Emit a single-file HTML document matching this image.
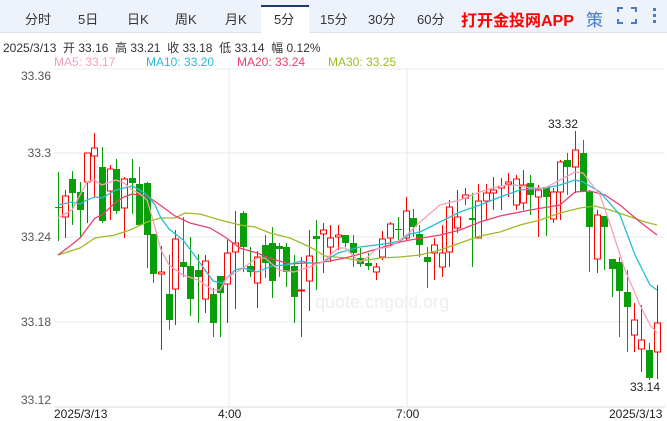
<!DOCTYPE html>
<html><head><meta charset="utf-8"><style>
body{margin:0;width:667px;height:421px;overflow:hidden;background:#fff;font-family:"Liberation Sans","Noto Sans CJK SC",sans-serif;position:relative}
.hdr{position:absolute;left:0;top:0;width:667px;height:32px;background:#eef3fb;border-bottom:1px solid #dde3ee}
.t{position:absolute;top:9px;font-size:13px;color:#333}
.act{position:absolute;left:261px;top:5px;width:48px;height:28px;background:#fff;border-top:2px solid #1f3a6e}
.info{position:absolute;left:3px;top:39px;font-size:12px;color:#333;white-space:nowrap}
.ma{position:absolute;top:55px;font-size:12px;white-space:nowrap}
svg{position:absolute;left:0;top:0}
</style></head><body>
<div class="hdr"></div>
<div class="act"></div>
<span class="t" style="left:25px">分时</span>
<span class="t" style="left:78px">5日</span>
<span class="t" style="left:127px">日K</span>
<span class="t" style="left:175px">周K</span>
<span class="t" style="left:225px">月K</span>
<span class="t" style="left:274px">5分</span>
<span class="t" style="left:320px">15分</span>
<span class="t" style="left:368px">30分</span>
<span class="t" style="left:417px">60分</span>
<span class="t" style="left:461px;top:7px;font-size:16px;font-weight:bold;color:#f00">打开金投网APP</span>
<span class="t" style="left:586px;top:6px;font-size:17px;color:#4a7cc4">策</span>
<div class="info">2025/3/13&nbsp; 开 33.16&nbsp; 高 33.21&nbsp; 收 33.18&nbsp; 低 33.14&nbsp; 幅 0.12%</div>
<span class="ma" style="left:54px;color:#f4a0b8">MA5: 33.17</span>
<span class="ma" style="left:146px;color:#26bcd5">MA10: 33.20</span>
<span class="ma" style="left:237px;color:#e8406f">MA20: 33.24</span>
<span class="ma" style="left:328px;color:#9abd23">MA30: 33.25</span>
<svg width="667" height="421" id="s" font-family="Liberation Sans, sans-serif">
<g fill="none" stroke="#4a7cc4" stroke-width="2">
<path d="M618 12v-4h5M631 8h5v4M636 19v4h-5M623 23h-5v-4"/></g>
<g fill="#4a7cc4"><rect x="653" y="8" width="3" height="3"/><rect x="653" y="14" width="3" height="3"/><rect x="653" y="20" width="3" height="3"/></g>
<line x1="54" y1="69" x2="665" y2="69" stroke="#eee"/>
<g stroke="#e8e8e8"><line x1="54" y1="153" x2="665" y2="153"/><line x1="54" y1="237" x2="665" y2="237"/><line x1="54" y1="322" x2="665" y2="322"/><line x1="229" y1="69" x2="229" y2="407"/><line x1="407" y1="69" x2="407" y2="407"/></g>
<line x1="54" y1="407" x2="665" y2="407" stroke="#ddd"/>
<g font-size="12" fill="#555" text-anchor="end"><text x="51" y="80">33.36</text><text x="51" y="157">33.3</text><text x="51" y="241">33.24</text><text x="51" y="326">33.18</text><text x="51" y="404">33.12</text></g>
<g font-size="12" fill="#222"><text x="54" y="418">2025/3/13</text><text x="218" y="418">4:00</text><text x="396" y="418">7:00</text><text x="609" y="418">2025/3/13</text><text x="548" y="128">33.32</text><text x="630" y="391">33.14</text></g>
<text x="315" y="308" font-size="18" fill="#eee">quote.cngold.org</text>
<g id="c"></g><g id="m" fill="none" stroke-width="1.3"></g>
</svg>
<script>
var d=[[58,207,208,172,241,0],[65,196,217,190,238,1],[72,179,193,171,225,0],[80,192,210,182,238,0],[87,153,182,153,223,1],[94,148,156,133,197,1],[102,167,221,147,223,0],[110,169,191,165,220,1],[116,169,211,159,214,0],[124,179,208,177,238,1],[132,178,183,159,214,0],[139,184,225,167,225,0],[147,183,235,182,268,0],[153,234,274,234,283,0],[161,272,274,246,350,1],[169,294,320,255,330,0],[175,239,289,230,325,1],[183,262,267,217,277,0],[190,266,299,237,316,0],[198,270,277,254,323,0],[205,261,299,255,313,1],[213,294,323,288,337,0],[220,276,293,276,337,0],[227,253,284,240,323,1],[235,243,252,211,309,1],[243,213,247,211,272,0],[250,266,272,247,277,0],[257,257,283,251,308,1],[265,245,263,235,278,0],[272,243,281,227,298,0],[279,246,249,243,277,0],[286,247,272,243,287,0],[294,266,297,255,323,0],[301,290,291,257,337,1],[309,256,281,230,311,1],[316,236,239,220,290,0],[323,230,234,223,273,1],[330,238,247,225,262,1],[338,235,237,225,250,1],[345,235,243,235,247,0],[353,243,253,235,267,0],[360,258,264,248,267,0],[368,263,266,253,270,0],[376,267,272,263,280,1],[382,239,257,231,260,1],[390,224,238,222,247,1],[398,229,230,217,243,0],[406,211,238,197,240,1],[413,218,227,209,237,0],[419,234,245,225,257,0],[427,257,262,247,288,0],[434,245,253,238,280,1],[442,253,267,225,277,1],[449,207,252,200,267,1],[457,217,228,190,233,1],[465,195,198,188,205,1],[472,218,220,193,267,0],[478,201,238,184,238,1],[486,193,201,184,220,1],[493,190,193,177,210,1],[501,186,188,178,210,1],[508,182,184,173,197,1],[516,179,205,175,210,1],[523,185,203,170,210,1],[530,183,195,175,215,0],[538,190,197,185,237,1],[546,187,197,187,236,0],[553,192,219,188,223,1],[560,162,192,160,220,1],[567,160,167,153,195,0],[575,150,167,131,193,1],[583,153,192,140,192,0],[589,192,227,190,272,0],[597,215,259,210,273,1],[604,216,227,216,270,0],[612,259,269,259,297,0],[619,262,291,257,337,0],[627,292,307,270,352,0],[634,320,335,303,352,1],[641,340,349,305,372,1],[649,350,378,343,380,0],[657,323,352,285,379,1]];
var h='';d.forEach(function(c){var col=c[5]?'#f00':'#0a9f0a';h+='<line x1="'+(c[0]+.5)+'" y1="'+c[3]+'" x2="'+(c[0]+.5)+'" y2="'+c[4]+'" stroke="'+col+'"/>';var ht=Math.max(c[2]-c[1],1);if(c[5])h+='<rect x="'+(c[0]-2.5)+'" y="'+c[1]+'" width="6" height="'+ht+'" fill="#fff" stroke="#f00"/>';else h+='<rect x="'+(c[0]-3)+'" y="'+c[1]+'" width="7" height="'+ht+'" fill="#0a9f0a"/>';});
document.getElementById('c').innerHTML=h;
var L=[['#9abd23','58,255 80,248 95,238 115,235 130,230 147,222 160,218 175,218 185,213 200,214 220,220 240,225 255,227 270,233 290,238 310,247 325,256 345,258 360,261 380,258 400,257 420,255 440,250 460,243 480,236 500,232 520,225 540,220 560,213 580,208 595,206 610,210 625,215 645,222 657,225'],
['#e8406f','58,255 70,246 80,238 95,218 102,215 116,202 124,197 132,194 140,195 147,196 160,205 175,216 190,223 210,228 225,237 240,248 257,253 272,259 290,264 305,263 316,263 330,261 345,258 360,254 380,248 400,242 410,240 440,235 460,230 480,222 500,216 530,210 560,205 575,192 590,191 605,195 620,205 640,222 657,235'],
['#26bcd5','58,205 72,202 80,204 87,200 95,197 102,198 116,190 124,188 132,186 140,190 147,195 155,205 161,218 169,229 183,240 198,260 213,281 222,283 235,270 243,268 257,272 272,266 286,265 301,261 316,264 323,262 338,253 360,247 376,245 390,243 400,241 410,234 420,232 440,222 460,212 480,205 500,197 520,190 545,188 560,185 575,180 583,182 600,192 620,215 635,255 650,285 657,290'],
['#f4a0b8','58,218 72,210 87,182 94,180 102,185 116,180 124,183 132,190 139,193 147,200 153,220 161,250 169,265 183,275 198,280 213,290 220,290 227,278 243,268 257,258 265,258 279,270 294,272 309,267 323,262 338,248 345,248 360,262 368,257 376,249 390,247 400,240 410,232 420,222 440,205 460,200 480,192 500,186 515,185 530,188 545,188 560,180 575,172 583,173 590,182 600,195 612,230 625,270 640,305 650,325 657,333']];
var m='';L.forEach(function(l){m+='<polyline stroke="'+l[0]+'" points="'+l[1]+'"/>';});document.getElementById('m').innerHTML=m;
</script>
</body></html>
